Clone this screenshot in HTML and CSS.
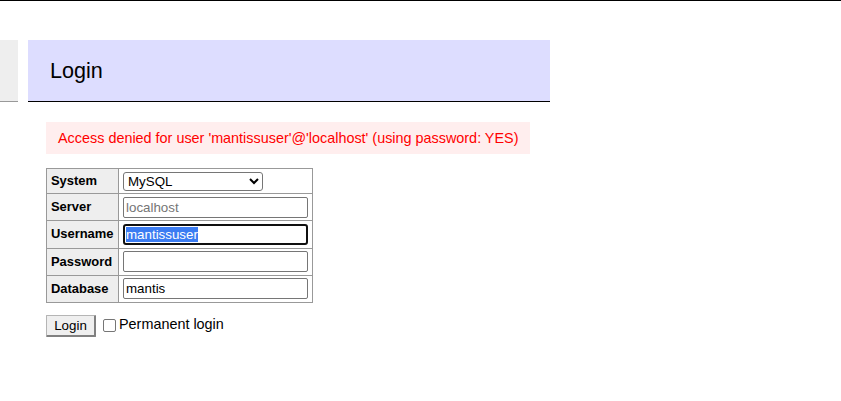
FILE: index.html
```html
<!DOCTYPE html>
<html>
<head>
<meta charset="utf-8">
<title>Login - Adminer</title>
<link rel="stylesheet" href="styles.css">
</head>
<body>
<div class="topline"></div>
<div class="page">
  <div class="menu"></div>
  <div class="content">
    <h2 class="title">Login</h2>
    <div class="error">Access denied for user 'mantissuser'@'localhost' (using password: YES)</div>
    <table class="form">
      <tr><th>System</th><td><select class="sel"><option>MySQL</option></select></td></tr>
      <tr><th>Server</th><td><input class="inp" placeholder="localhost"></td></tr>
      <tr><th>Username</th><td><div class="inp fake focus"><span class="selected">mantissuser</span></div></td></tr>
      <tr><th>Password</th><td><input class="inp" type="password"></td></tr>
      <tr><th>Database</th><td><input class="inp" value="mantis"></td></tr>
    </table>
    <div class="actions">
      <button class="btn">Login</button>
      <label class="perm"><span class="check"></span>Permanent login</label>
    </div>
  </div>
</div>
</body>
</html>
```
FILE: styles.css
```css
html, body {
  margin: 0;
  padding: 0;
  background: #fff;
}
body {
  color: #000;
  font-family: "Liberation Sans", Arial, sans-serif;
  font-size: 14.4px;
  line-height: 1.25;
}
.topline {
  border-top: 1px solid #000;
}
.page {
  display: flex;
  align-items: flex-start;
  padding-top: 39px;
  gap: 10px;
}
.menu {
  width: 18px;
  height: 61px;
  background: #eee;
  border-bottom: 1px solid #999;
}
.content {
  width: 504px;
  padding-left: 18px;
}
.title {
  margin: 0 0 20px -18px;
  padding: 17px 22px;
  height: 27px;
  font-size: 21.6px;
  line-height: 27px;
  font-weight: normal;
  background: #ddf;
  border-bottom: 1px solid #000;
}
.error {
  color: #f00;
  background: #fee;
  padding: 7px 12px;
  margin: 0 20px 14px 0;
  line-height: 18px;
  white-space: nowrap;
}
.form {
  border-collapse: collapse;
  font-size: 12.96px;
  line-height: 1.25;
}
.form th, .form td {
  border: 1px solid #999;
  padding: 2.6px 3.9px;
}
.form th {
  background: #eee;
  text-align: left;
  font-weight: bold;
  padding-right: 4.6px;
}
.sel {
  display: block;
  width: 140px;
  height: 19px;
  font-family: "Liberation Sans", Arial, sans-serif;
  font-size: 13.333px;
  border: 1px solid #767676;
  border-radius: 3px;
  background: #fff;
  color: #000;
  padding: 0;
  margin: 0;
}
.inp {
  display: block;
  box-sizing: border-box;
  width: 185px;
  height: 21px;
  font-family: "Liberation Sans", Arial, sans-serif;
  font-size: 13.333px;
  line-height: 17px;
  border: 1px solid #767676;
  border-radius: 2px;
  padding: 1px 2px;
  margin: 0;
  background: #fff;
  color: #000;
}
.inp::placeholder {
  color: #757575;
}
.fake.focus {
  border: 2px solid #101010;
  border-radius: 3px;
  padding: 0 1px;
}
.selected {
  background: #3b7cf2;
  color: #fff;
}
.actions {
  display: flex;
  align-items: center;
  margin-top: 12px;
}
.btn {
  box-sizing: border-box;
  width: 50px;
  height: 22px;
  font-family: "Liberation Sans", Arial, sans-serif;
  font-size: 13.333px;
  background: #efefef;
  color: #000;
  border-style: solid;
  border-color: #b5b5b5 #808080 #808080 #b5b5b5;
  border-width: 1px 2px 2px 1px;
  border-radius: 1px;
  padding: 0;
  margin: 0;
}
.perm {
  display: flex;
  align-items: center;
  margin-left: 7px;
  font-size: 14.4px;
  position: relative;
  top: -2px;
}
.check {
  box-sizing: border-box;
  width: 13px;
  height: 13px;
  border: 1px solid #767676;
  border-radius: 2px;
  background: #fff;
  margin-right: 3px;
  position: relative;
  top: 2px;
}
```
